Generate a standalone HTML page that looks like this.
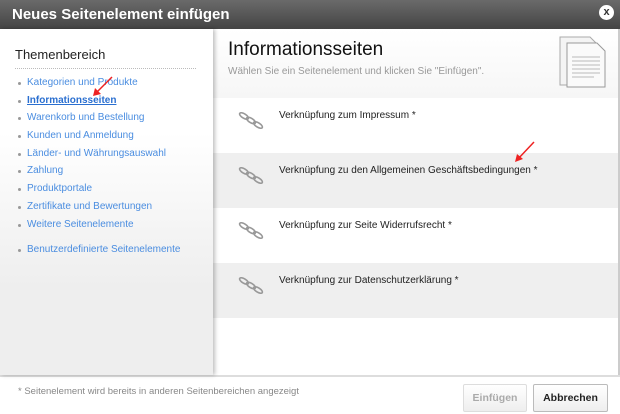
<!DOCTYPE html>
<html><head><meta charset="utf-8"><style>
*{margin:0;padding:0;box-sizing:border-box}
body{width:620px;height:414px;overflow:hidden;font-family:"Liberation Sans",Arial,sans-serif;background:#fff;position:relative}
.title{position:absolute;left:0;top:0;width:620px;height:29px;background:linear-gradient(#6a6a6a,#444);color:#fff;font-weight:bold;font-size:15px;padding:6px 0 0 12px}
.x{position:absolute;right:6px;top:5px;width:15px;height:15px;border-radius:50%;background:#fff;color:#333;font-size:11px;font-weight:bold;text-align:center;line-height:15px}
.left{position:absolute;left:0;top:29px;width:213px;height:346px;background:linear-gradient(#fff 0,#fff 30%,#eee 75%,#eee);box-shadow:2px 0 4px rgba(0,0,0,.25);z-index:2}
.left h3{font-weight:normal;font-size:13px;color:#222;margin:18px 0 0 15px;padding-bottom:6px;border-bottom:1px dotted #bbb;width:181px}
.left ul{list-style:none;margin:8px 0 0 18px;font-size:10px}
.left li{height:17.7px;color:#4a8de0;position:relative;padding-left:9px}
.left li:before{content:"";position:absolute;left:0;top:5px;width:3px;height:3px;border-radius:50%;background:#999}
.left li.a{font-weight:bold;color:#2a6fd0;text-decoration:underline}
.right{position:absolute;left:213px;top:29px;width:407px;height:346px;border-right:2px solid #ccc}
.hd{height:69px;background:linear-gradient(#fff,#f6f6f6);padding:10px 0 0 15px}
.hd h1{font-weight:normal;font-size:19px;color:#111}
.hd p{font-size:10px;color:#999;margin-top:5px}
.row{height:55px;position:relative;font-size:10px;color:#222;padding:12px 0 0 66px}
.g{background:#efefef}
.ic{position:absolute;left:25px;top:14px}
.foot{position:absolute;left:0;top:375px;width:620px;height:39px;border-top:2px solid #ddd;background:#fff}
.foot span{position:absolute;left:18px;top:9px;font-size:9.5px;color:#888}
.b{position:absolute;top:7px;height:28px;border:1px solid #bbb;border-radius:2px;font-size:10.5px;font-weight:bold;text-align:center;line-height:26px;background:linear-gradient(#fff,#eee)}
</style></head><body>
<svg width="0" height="0" style="position:absolute"><defs><g id="ch" fill="none" stroke="#999" stroke-width="1.6"><ellipse cx="6" cy="4" rx="5" ry="2.2" transform="rotate(32 6 4)"/><ellipse cx="13" cy="8.5" rx="5" ry="2.2" transform="rotate(32 13 8.5)"/><ellipse cx="20" cy="13" rx="5" ry="2.2" transform="rotate(32 20 13)"/></g></defs></svg>
<div class="title">Neues Seitenelement einfügen<div class="x">x</div></div>
<div class="left"><h3>Themenbereich</h3><ul>
<li>Kategorien und Produkte</li><li class="a">Informationsseiten</li><li>Warenkorb und Bestellung</li><li>Kunden und Anmeldung</li><li>Länder- und Währungsauswahl</li><li>Zahlung</li><li>Produktportale</li><li>Zertifikate und Bewertungen</li><li>Weitere Seitenelemente</li><li style="margin-top:8px">Benutzerdefinierte Seitenelemente</li></ul>
<svg style="position:absolute;left:90px;top:46px" width="24" height="24"><line x1="22" y1="2" x2="4" y2="20" stroke="#e22" stroke-width="1.5"/><path d="M3 21 L5 13 L11 19 Z" fill="#e22"/></svg>
</div>
<div class="right">
<div class="hd"><h1>Informationsseiten</h1><p>Wählen Sie ein Seitenelement und klicken Sie "Einfügen".</p>
<svg style="position:absolute;left:345px;top:6px" width="50" height="54"><path d="M2 2h30l8 8v40H2z" fill="#f4f4f4" stroke="#aaa"/><path d="M9 8h30l8 8v36H9z" fill="#fafafa" stroke="#999"/><g stroke="#bbb"><line x1="14" y1="22" x2="42" y2="22"/><line x1="14" y1="26" x2="42" y2="26"/><line x1="14" y1="30" x2="42" y2="30"/><line x1="14" y1="34" x2="42" y2="34"/><line x1="14" y1="38" x2="42" y2="38"/><line x1="14" y1="42" x2="36" y2="42"/></g></svg></div>
<div class="row"><svg class="ic" width="26" height="18"><use href="#ch"/></svg>Verknüpfung zum Impressum *</div>
<div class="row g"><svg class="ic" width="26" height="18"><use href="#ch"/></svg>Verknüpfung zu den Allgemeinen Geschäftsbedingungen *
<svg style="position:absolute;left:299px;top:-13px" width="24" height="24"><line x1="22" y1="2" x2="5" y2="20" stroke="#e22" stroke-width="1.5"/><path d="M3 22 L5 14 L11 19 Z" fill="#e22"/></svg></div>
<div class="row"><svg class="ic" width="26" height="18"><use href="#ch"/></svg>Verknüpfung zur Seite Widerrufsrecht *</div>
<div class="row g"><svg class="ic" width="26" height="18"><use href="#ch"/></svg>Verknüpfung zur Datenschutzerklärung *</div>
</div>
<div class="foot"><span>* Seitenelement wird bereits in anderen Seitenbereichen angezeigt</span>
<div class="b" style="left:463px;width:64px;color:#aaa;border-color:#ddd">Einfügen</div>
<div class="b" style="left:533px;width:75px;color:#222">Abbrechen</div></div>
</body></html>
